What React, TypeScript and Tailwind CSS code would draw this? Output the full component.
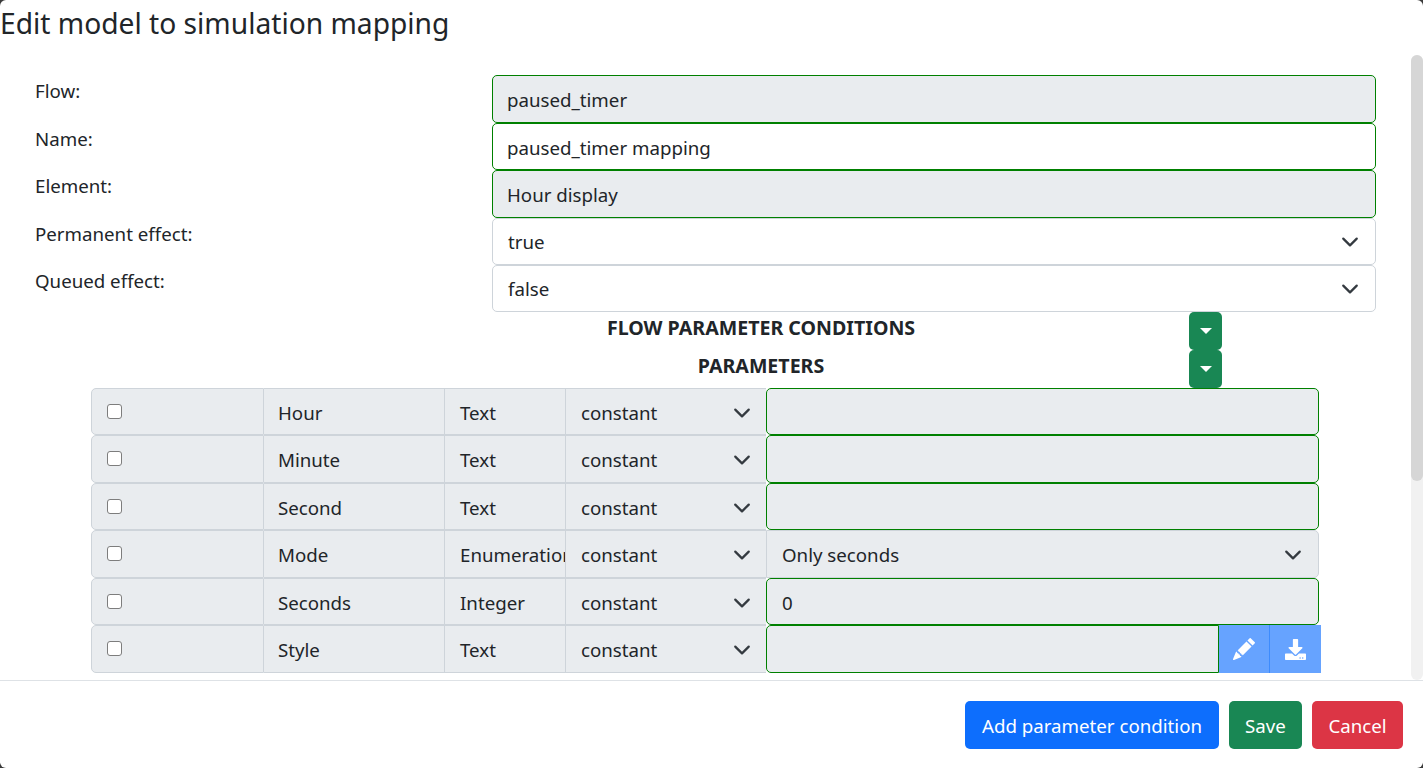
import { BsPencilFill } from "react-icons/bs"
import { FaDownload } from "react-icons/fa"

const formRows = [
  { label: "Flow:", value: "paused_timer", kind: "readonly" },
  { label: "Name:", value: "paused_timer mapping", kind: "input" },
  { label: "Element:", value: "Hour display", kind: "readonly" },
  { label: "Permanent effect:", value: "true", kind: "select" },
  { label: "Queued effect:", value: "false", kind: "select" },
]

const params = [
  { name: "Hour", type: "Text", value: "", kind: "input" },
  { name: "Minute", type: "Text", value: "", kind: "input" },
  { name: "Second", type: "Text", value: "", kind: "input" },
  { name: "Mode", type: "Enumeration", value: "Only seconds", kind: "select" },
  { name: "Seconds", type: "Integer", value: "0", kind: "input" },
  { name: "Style", type: "Text", value: "", kind: "style" },
]

function Chevron() {
  return (
    <svg viewBox="0 0 16 16" className="w-[18px] h-[18px] shrink-0 -mt-[1px]" fill="none" stroke="#343a40" strokeWidth="2" strokeLinecap="round" strokeLinejoin="round">
      <path d="m2 5 6 6 6-6" />
    </svg>
  )
}

function Caret() {
  return (
    <button className="w-[33px] h-[38px] bg-[#198754] rounded-[5px] flex items-center justify-center">
      <span className="w-0 h-0 border-x-[6px] border-x-transparent border-t-[6px] border-t-white" />
    </button>
  )
}

function FormField({ value, kind }: { value: string; kind: string }) {
  if (kind === "select") {
    return (
      <div className="h-[47px] bg-white border border-[#ced4da] rounded-[5px] flex items-center justify-between pl-[15px] pr-[16px] pt-[3px]">
        <span>{value}</span>
        <Chevron />
      </div>
    )
  }
  return (
    <div className={`h-[47.5px] border border-[#008000] rounded-[5px] flex items-center pl-[14px] pt-[3px] ${kind === "readonly" ? "bg-[#e9ecef]" : "bg-white"}`}>
      {value}
    </div>
  )
}

export default function App() {
  return (
    <div className="w-[1423px] h-[768px] bg-[#3a3a3a]">
      <div className="w-full h-full overflow-hidden rounded-[6px] bg-white text-[#212529] text-[18.7px] flex flex-col" style={{ fontFamily: '"Noto Sans", sans-serif' }}>
        <h5 className="h-[55px] shrink-0 text-[28.2px] leading-[47px]">Edit model to simulation mapping</h5>

        <div className="h-[625px] shrink-0 flex">
          <div className="flex-1 min-w-0 overflow-hidden pt-[20px]">
            <div className="pl-[35px] pr-[35px]">
              {formRows.map((row) => (
                <div key={row.label} className="flex">
                  <div className="w-[457px] shrink-0 pt-[1px] leading-[30px]">{row.label}</div>
                  <div className="flex-1">
                    <FormField value={row.value} kind={row.kind} />
                  </div>
                </div>
              ))}
            </div>

            <div className="flex h-[38px] pl-[333px]">
              <div className="w-[856px] font-bold text-center text-[19.6px] leading-[32px]">FLOW PARAMETER CONDITIONS</div>
              <Caret />
            </div>
            <div className="flex h-[38px] pl-[333px]">
              <div className="w-[856px] font-bold text-center text-[19.6px] leading-[32px]">PARAMETERS</div>
              <Caret />
            </div>

            <div className="ml-[91px] mt-[0.25px] w-[1230px]">
              {params.map((p) => (
                <div key={p.name} className="flex h-[47.5px]">
                  <div className="w-[173px] shrink-0 bg-[#e9ecef] border border-[#ced4da] rounded-l-[5px] pl-[15px] pt-[15px]">
                    <div className="w-[15px] h-[15px] bg-white border border-[#7d7d7d] rounded-[3px]" />
                  </div>
                  <div className="w-[181px] shrink-0 bg-[#e9ecef] border-y border-r border-[#ced4da] pl-[14px] pt-[3px] flex items-center">{p.name}</div>
                  <div className="w-[121px] shrink-0 bg-[#e9ecef] border-y border-r border-[#ced4da] pl-[15px] pt-[3px] flex items-center overflow-hidden whitespace-nowrap">{p.type}</div>
                  <div className="w-[200px] shrink-0 bg-[#e9ecef] border-y border-[#ced4da] pl-[15px] pr-[15px] pt-[3px] flex items-center justify-between">
                    <span>constant</span>
                    <Chevron />
                  </div>
                  {p.kind === "select" && (
                    <div className="w-[553px] shrink-0 bg-[#e9ecef] border border-[#ced4da] rounded-r-[5px] pl-[15px] pr-[16px] pt-[3px] flex items-center justify-between">
                      <span>{p.value}</span>
                      <Chevron />
                    </div>
                  )}
                  {p.kind === "input" && (
                    <div className="w-[553px] shrink-0 bg-[#e9ecef] border border-[#008000] rounded-[5px] pl-[15px] pt-[3px] flex items-center">{p.value}</div>
                  )}
                  {p.kind === "style" && (
                    <div className="flex shrink-0">
                      <div className="w-[453px] bg-[#e9ecef] border border-[#008000] rounded-l-[5px]" />
                      <div className="w-[51px] bg-[#66a3ff] border-r border-[#3d8bfd] flex items-center justify-center">
                        <BsPencilFill className="w-[22px] h-[22px] text-white" />
                      </div>
                      <div className="w-[51px] bg-[#66a3ff] flex items-center justify-center">
                        <FaDownload className="w-[21px] h-[21px] text-white" />
                      </div>
                    </div>
                  )}
                </div>
              ))}
            </div>
          </div>

          <div className="w-[12px] shrink-0 bg-[#f1f1f1] rounded-[6px]">
            <div className="h-[426px] bg-[#d6d6d6] rounded-[6px]" />
          </div>
        </div>

        <div className="flex-1 border-t border-[#dee2e6] flex items-start justify-end gap-[10px] pt-[20px] pr-[20px]">
          <button className="w-[254px] h-[47.5px] pt-[2px] bg-[#0d6efd] text-white rounded-[5px]">Add parameter condition</button>
          <button className="w-[73px] h-[47.5px] pt-[2px] bg-[#198754] text-white rounded-[5px]">Save</button>
          <button className="w-[91px] h-[47.5px] pt-[2px] bg-[#dc3545] text-white rounded-[5px]">Cancel</button>
        </div>
      </div>
    </div>
  )
}
